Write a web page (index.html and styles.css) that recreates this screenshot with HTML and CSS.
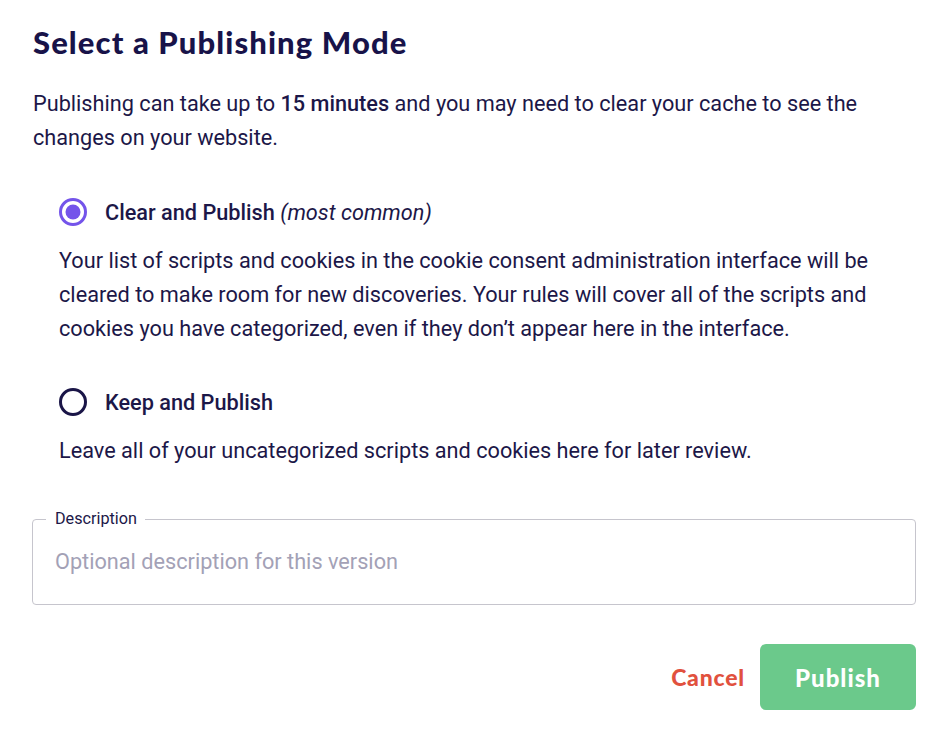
FILE: index.html
```html
<!DOCTYPE html>
<html>
<head>
<meta charset="utf-8">
<link rel="stylesheet" href="styles.css">
</head>
<body>
<div class="dialog">
  <h1 class="title">Select a Publishing Mode</h1>
  <p class="intro">Publishing can take up to <strong>15 minutes</strong> and you may need to clear your cache to see the<br>changes on your website.</p>

  <div class="option">
    <label class="option-row">
      <svg class="radio" width="30" height="30" viewBox="0 0 30 30"><circle cx="15" cy="15" r="12.5" fill="none" stroke="#7454ea" stroke-width="3"/><circle cx="15" cy="15" r="7.5" fill="#7454ea"/></svg>
      <span class="option-label">Clear and Publish <em>(most common)</em></span>
    </label>
    <p class="option-desc">Your list of scripts and cookies in the cookie consent administration interface will be cleared to make room for new discoveries. Your rules will cover all of the scripts and cookies you have categorized, even if they don’t appear here in the interface.</p>
  </div>

  <div class="option">
    <label class="option-row">
      <svg class="radio" width="30" height="30" viewBox="0 0 30 30"><circle cx="15" cy="15" r="12.5" fill="none" stroke="#1a1547" stroke-width="3"/></svg>
      <span class="option-label">Keep and Publish</span>
    </label>
    <p class="option-desc">Leave all of your uncategorized scripts and cookies here for later review.</p>
  </div>

  <fieldset class="field">
    <legend class="field-legend">Description</legend>
    <div class="field-input">Optional description for this version</div>
  </fieldset>

  <div class="actions">
    <button class="btn-cancel">Cancel</button>
    <button class="btn-publish">Publish</button>
  </div>
</div>
</body>
</html>
```
FILE: styles.css
```css
html, body {
  margin: 0;
  padding: 0;
  background: #ffffff;
}
body {
  font-family: Roboto, "Liberation Sans", sans-serif;
  color: #1c1748;
}
.dialog {
  padding: 22px 36px 0 32px;
}
.title {
  margin: 0 0 0 1px;
  font-family: Lato, "Liberation Sans", sans-serif;
  font-weight: 900;
  font-size: 31px;
  line-height: 40px;
  color: #181349;
  letter-spacing: 1.1px;
}
.intro {
  margin: 25px 0 0 1px;
  font-size: 21.7px;
  line-height: 34px;
}
.intro strong {
  font-weight: 500;
}
.option-row {
  display: flex;
  align-items: center;
  gap: 17px;
  margin-top: 40px;
  margin-left: 26px;
  height: 34px;
}
.option + .option .option-row {
  margin-top: 39px;
}
.radio {
  display: block;
  flex: none;
}
.option-label {
  font-size: 21.7px;
  font-weight: 500;
}
.option-label em {
  font-weight: 400;
}
.option-desc {
  margin: 15px 0 0 27px;
  font-size: 21.7px;
  line-height: 34px;
}
.field {
  margin: 43px 0 0 0;
  padding: 0 22px;
  border: 1px solid #c6c5cd;
  border-radius: 4px;
  min-width: 0;
}
.field-legend {
  margin-left: -9px;
  padding: 0 8px 0 9px;
  font-size: 16.2px;
  line-height: 16px;
  color: #1c1748;
}
.field-input {
  font-size: 21.7px;
  line-height: 24px;
  height: 24px;
  color: #a3a1b6;
  padding: 23px 0 30px;
}
.actions {
  display: flex;
  justify-content: flex-end;
  align-items: center;
  gap: 15px;
  margin-top: 39px;
}
.btn-cancel {
  border: none;
  background: none;
  padding: 0;
  font-family: Lato, "Liberation Sans", sans-serif;
  font-weight: 900;
  font-size: 23px;
  letter-spacing: 0.8px;
  color: #e1513e;
  cursor: pointer;
}
.btn-publish {
  border: none;
  width: 156px;
  height: 66px;
  border-radius: 6px;
  background: #6bc98b;
  color: #ffffff;
  font-family: Lato, "Liberation Sans", sans-serif;
  font-weight: 900;
  font-size: 24px;
  letter-spacing: 1px;
  cursor: pointer;
}
```
